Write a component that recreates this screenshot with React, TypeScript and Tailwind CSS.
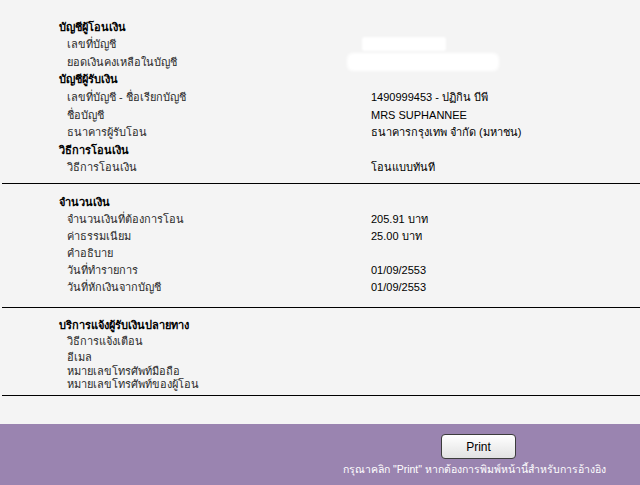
import React from "react";

type Row = { label: string; value?: React.ReactNode; h?: string };

const font = { fontFamily: '"Tahoma", "Liberation Sans", "Noto Sans", "DejaVu Sans", sans-serif' };

function Header({ children, h = "h-[17.6px]" }: { children: React.ReactNode; h?: string }) {
  return (
    <div className={`flex ${h} items-center pl-[59px] text-[11px] font-bold text-black`}>
      {children}
    </div>
  );
}

function Line({ label, value, h = "h-[17.6px]" }: Row) {
  return (
    <div className={`flex ${h} items-center text-[11px]`}>
      <div className="w-[371px] shrink-0 pl-[67px] text-[#2a2a2a]">{label}</div>
      <div className="text-black">{value}</div>
    </div>
  );
}

function Rule() {
  return <div className="ml-[2px] h-px bg-black" />;
}

export default function App() {
  return (
    <div className="flex h-[485px] w-[640px] flex-col bg-[#f4f4f4]" style={font}>
      <div className="flex h-[424px] flex-col">
        <div className="flex flex-col pt-[18px] pb-[7px]">
          <Header>บัญชีผู้โอนเงิน</Header>
          <div className="flex h-[17.6px] items-center text-[11px]">
            <div className="w-[362px] shrink-0 pl-[67px] text-[#2a2a2a]">เลขที่บัญชี</div>
            <div className="h-[14px] w-[84px] rounded-[3px] bg-white blur-[1px]" />
          </div>
          <div className="flex h-[17.6px] items-center text-[11px]">
            <div className="w-[347px] shrink-0 pl-[67px] text-[#2a2a2a]">ยอดเงินคงเหลือในบัญชี</div>
            <div className="h-[18px] w-[152px] rounded-[6px] bg-white blur-[1.5px]" />
          </div>
          <Header>บัญชีผู้รับเงิน</Header>
          <Line label="เลขที่บัญชี - ชื่อเรียกบัญชี" value="1490999453 - ปฏิกิน บีพี" />
          <Line label="ชื่อบัญชี" value="MRS SUPHANNEE" />
          <Line label="ธนาคารผู้รับโอน" value="ธนาคารกรุงเทพ จำกัด (มหาชน)" />
          <Header>วิธีการโอนเงิน</Header>
          <Line label="วิธีการโอนเงิน" value="โอนแบบทันที" />
        </div>
        <Rule />
        <div className="flex flex-col pt-[9px] pb-[11px]">
          <Header h="h-[17px]">จำนวนเงิน</Header>
          <Line h="h-[17px]" label="จำนวนเงินที่ต้องการโอน" value="205.91 บาท" />
          <Line h="h-[17px]" label="ค่าธรรมเนียม" value="25.00 บาท" />
          <Line h="h-[17px]" label="คำอธิบาย" value="" />
          <Line h="h-[17.5px]" label="วันที่ทำรายการ" value="01/09/2553" />
          <Line h="h-[17.5px]" label="วันที่หักเงินจากบัญชี" value="01/09/2553" />
        </div>
        <Rule />
        <div className="flex flex-col pt-[8px] pb-[5px]">
          <Header h="h-[17px]">บริการแจ้งผู้รับเงินปลายทาง</Header>
          <Line h="h-[16.5px]" label="วิธีการแจ้งเตือน" />
          <Line h="h-[14.5px]" label="อีเมล" />
          <Line h="h-[13px]" label="หมายเลขโทรศัพท์มือถือ" />
          <Line h="h-[13px]" label="หมายเลขโทรศัพท์ของผู้โอน" />
        </div>
        <Rule />
      </div>
      <div className="flex flex-1 flex-col bg-[#9a84b0] pt-[10px] pl-[343px]">
        <button className="ml-[98px] flex h-[25px] w-[75px] items-center justify-center rounded-[4px] border border-[#3c3c3c] bg-gradient-to-b from-white to-[#e2e2e2] text-[12px] text-black">
          Print
        </button>
        <div className="mt-[3px] whitespace-nowrap text-[10.5px] text-white">
          กรุณาคลิก "Print" หากต้องการพิมพ์หน้านี้สำหรับการอ้างอิง
        </div>
      </div>
    </div>
  );
}
